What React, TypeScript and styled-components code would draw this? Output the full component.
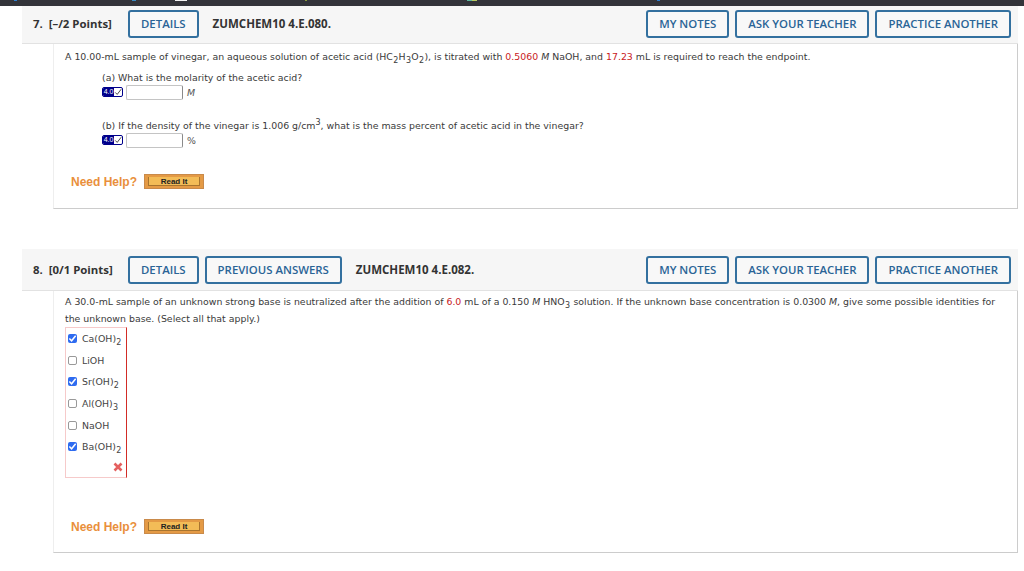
import React from 'react';
import styled, { createGlobalStyle } from 'styled-components';

const GlobalStyle = createGlobalStyle`
html, body {
  margin: 0;
  padding: 0;
  background: #fff;
}
`;

const bodyFont = `"DejaVu Sans", Verdana, sans-serif`;
const headFont = `"Open Sans", "Noto Sans", sans-serif`;

type QuestionHeaderProps = {
  label: string;
  code: string;
  showPrevious?: boolean;
  clipped?: boolean;
};

const QuestionHeader: React.FC<QuestionHeaderProps> = ({ label, code, showPrevious, clipped }) => (
  <Header $clipped={clipped}>
    <PointsLabel>{label}</PointsLabel>
    <HeadButton>DETAILS</HeadButton>
    {showPrevious && <HeadButton>PREVIOUS ANSWERS</HeadButton>}
    <CodeLabel>{code}</CodeLabel>
    <HeaderRight>
      <SideButton>MY NOTES</SideButton>
      <SideButton>ASK YOUR TEACHER</SideButton>
      <SideButton>PRACTICE ANOTHER</SideButton>
    </HeaderRight>
  </Header>
);

const AnswerRow: React.FC<{ unit: React.ReactNode }> = ({ unit }) => (
  <AnswerLine>
    <KeypadIcon>
      <KeypadNum>4.0</KeypadNum>
      <KeypadCheck viewBox="0 0 10 10">
        <path d="M1.5 5.5 L4 8 L9 1.5" fill="none" stroke="#444" strokeWidth="1.2" />
      </KeypadCheck>
    </KeypadIcon>
    <AnswerInput />
    <Unit>{unit}</Unit>
  </AnswerLine>
);

const NeedHelp: React.FC = () => (
  <HelpRow>
    <HelpText>Need Help?</HelpText>
    <ReadIt>
      <ReadItInner>Read It</ReadItInner>
    </ReadIt>
  </HelpRow>
);

export default function App() {
  const choices = [
    { id: 'ca', checked: true, label: <>Ca(OH)<Sub>2</Sub></> },
    { id: 'li', checked: false, label: <>LiOH</> },
    { id: 'sr', checked: true, label: <>Sr(OH)<Sub>2</Sub></> },
    { id: 'al', checked: false, label: <>Al(OH)<Sub>3</Sub></> },
    { id: 'na', checked: false, label: <>NaOH</> },
    { id: 'ba', checked: true, label: <>Ba(OH)<Sub>2</Sub></> },
  ];

  return (
    <Page>
      <GlobalStyle />
      <TopBar>
        <TopMark $left={14} $width={3} $color="#2f7fd0" />
        <TopMark $left={132} $width={4} $color="#3a8ac0" />
        <TopMark $left={175} $width={12} $color="#f4f4f4" />
        <TopMark $left={305} $width={2} $color="#8a9a3a" />
        <TopMark $left={467} $width={5} $color="#5fb8a0" />
        <TopMark $left={472} $width={5} $color="#b8c860" />
        <TopMark $left={657} $width={3} $color="#2f7fd0" />
      </TopBar>

      <Question>
        <QuestionHeader label="7.  [–/2 Points]" code="ZUMCHEM10 4.E.080." clipped />
        <Body>
          <Prompt>
            A 10.00-mL sample of vinegar, an aqueous solution of acetic acid (HC<Sub>2</Sub>H<Sub>3</Sub>O<Sub>2</Sub>), is titrated with <Red>0.5060</Red> <i>M</i> NaOH, and <Red>17.23</Red> mL is required to reach the endpoint.
          </Prompt>
          <Part>
            <PartText>(a) What is the molarity of the acetic acid?</PartText>
            <AnswerRow unit={<i>M</i>} />
          </Part>
          <Part $gap>
            <PartText>
              (b) If the density of the vinegar is 1.006 g/cm<Sup>3</Sup>, what is the mass percent of acetic acid in the vinegar?
            </PartText>
            <AnswerRow unit="%" />
          </Part>
          <NeedHelp />
        </Body>
      </Question>

      <Question $second>
        <QuestionHeader label="8.  [0/1 Points]" code="ZUMCHEM10 4.E.082." showPrevious />
        <Body $second>
          <Prompt $tall>
            A 30.0-mL sample of an unknown strong base is neutralized after the addition of <Red>6.0</Red> mL of a 0.150 <i>M</i> HNO<Sub>3</Sub> solution. If the unknown base concentration is 0.0300 <i>M</i>, give some possible identities for
            <br />
            the unknown base. (Select all that apply.)
          </Prompt>
          <ChoiceBox>
            {choices.map(c => (
              <Choice key={c.id}>
                <CheckBox $checked={c.checked}>
                  {c.checked && (
                    <svg viewBox="0 0 10 10" width="9" height="9">
                      <path d="M1.5 5 L4 7.5 L8.5 2" fill="none" stroke="#fff" strokeWidth="1.7" />
                    </svg>
                  )}
                </CheckBox>
                <span>{c.label}</span>
              </Choice>
            ))}
            <WrongMark viewBox="0 0 10 10">
              <path d="M1.5 1.5 L8.5 8.5 M8.5 1.5 L1.5 8.5" stroke="#e4605f" strokeWidth="2.6" fill="none" />
            </WrongMark>
          </ChoiceBox>
          <NeedHelp />
        </Body>
      </Question>
    </Page>
  );
}

const Page = styled.div`
width: 1024px;
height: 571px;
overflow: hidden;
background: #fff;
font-family: ${bodyFont};
color: #3a3a3a;
`;

const TopBar = styled.div`
position: relative;
height: 6px;
background: #33343a;
`;

const TopMark = styled.span<{ $left: number; $width: number; $color: string }>`
position: absolute;
top: 0;
left: ${p => p.$left}px;
width: ${p => p.$width}px;
height: 1px;
background: ${p => p.$color};
`;

const Question = styled.section<{ $second?: boolean }>`
margin: ${p => (p.$second ? '40px' : '0')} 6px 0 22px;
`;

const Header = styled.div<{ $clipped?: boolean }>`
display: flex;
align-items: center;
height: ${p => (p.$clipped ? '38px' : '42px')};
padding: 0 7px ${p => (p.$clipped ? '2px' : '0')} 11px;
box-sizing: border-box;
background: #f6f6f6;
border-bottom: 1px solid #e2e2e2;
font-family: ${headFont};
`;

const PointsLabel = styled.div`
width: 95px;
font-size: 11.4px;
font-weight: 700;
color: #333;
white-space: pre;
`;

const HeadButton = styled.div`
display: flex;
align-items: center;
height: 28px;
box-sizing: border-box;
padding: 0 11px;
margin-right: 6px;
border: 2px solid #33709f;
border-radius: 3px;
font-size: 11.4px;
font-weight: 600;
color: #2a6496;
background: #f8f8f8;
`;

const CodeLabel = styled.div`
margin-left: 8px;
font-size: 11.5px;
font-weight: 700;
color: #333;
`;

const HeaderRight = styled.div`
display: flex;
gap: 6px;
margin-left: auto;
`;

const SideButton = styled(HeadButton)`
margin-right: 0;
`;

const Body = styled.div<{ $second?: boolean }>`
margin-left: 31px;
height: ${p => (p.$second ? '262px' : '165px')};
box-sizing: border-box;
padding: ${p => (p.$second ? '3px' : '6px')} 11px 0 11px;
border-left: 1px solid #eee;
border-right: 1px solid #ccc;
border-bottom: 1px solid #ccc;
`;

const Prompt = styled.div<{ $tall?: boolean }>`
font-size: 9.4px;
line-height: ${p => (p.$tall ? '16.5px' : '13px')};
`;

const Red = styled.span`
color: #c8201c;
`;

const Sub = styled.sub`
font-size: 8px;
line-height: 0;
vertical-align: -3px;
margin: 0 0.3px;
`;

const Sup = styled.sup`
font-size: 8px;
line-height: 0;
`;

const Part = styled.div<{ $gap?: boolean }>`
margin: ${p => (p.$gap ? '19px' : '8px')} 0 0 37px;
font-size: 9.4px;
`;

const PartText = styled.div`
line-height: 13px;
`;

const AnswerLine = styled.div`
display: flex;
align-items: center;
height: 16px;
`;

const KeypadIcon = styled.span`
display: inline-flex;
width: 21px;
height: 10px;
margin-right: 3px;
border: 1px solid #00008b;
border-radius: 2px;
box-sizing: border-box;
overflow: hidden;
background: #fff;
`;

const KeypadNum = styled.span`
width: 11px;
background: #00008b;
color: #fff;
font-family: "Liberation Sans", sans-serif;
font-size: 7px;
line-height: 8px;
text-align: center;
white-space: nowrap;
overflow: hidden;
`;

const KeypadCheck = styled.svg`
width: 8px;
height: 8px;
`;

const AnswerInput = styled.span`
display: block;
width: 57px;
height: 15px;
box-sizing: border-box;
background: #fff;
border: 1px solid #c4c4c4;
border-right-color: #8a8a8a;
border-radius: 2px;
`;

const Unit = styled.span`
margin-left: 4px;
font-size: 9.4px;
color: #555;
`;

const HelpRow = styled.div`
display: flex;
align-items: center;
gap: 7px;
margin: 26px 0 0 6px;
`;

const HelpText = styled.span`
font-family: "Liberation Sans", Arial, sans-serif;
font-size: 12px;
font-weight: 700;
color: #e98f3c;
`;

const ReadIt = styled.span`
display: block;
width: 60px;
height: 15px;
box-sizing: border-box;
padding: 2px 3px;
background: #e49a45;
border: 1px solid #c98a4a;
`;

const ReadItInner = styled.span`
display: flex;
align-items: center;
justify-content: center;
height: 100%;
background: #f3bc57;
border: 1px solid #a8742f;
border-top-width: 0;
box-sizing: border-box;
font-family: "Liberation Sans", Arial, sans-serif;
font-size: 8px;
font-weight: 700;
color: #222;
`;

const ChoiceBox = styled.div`
position: relative;
width: 62px;
height: 151px;
box-sizing: border-box;
margin-bottom: 41px;
border: 1px solid #f6caca;
border-right: 1px solid #d22c26;
`;

const Choice = styled.div`
display: flex;
align-items: center;
gap: 5px;
height: 21.6px;
padding-left: 2px;
font-size: 9.4px;
color: #444;
`;

const CheckBox = styled.span<{ $checked: boolean }>`
display: flex;
align-items: center;
justify-content: center;
width: 9px;
height: 9px;
box-sizing: border-box;
border-radius: 2px;
border: ${p => (p.$checked ? '0' : '1px solid #999')};
background: ${p => (p.$checked ? '#2e6bf0' : '#fff')};
`;

const WrongMark = styled.svg`
position: absolute;
right: 3px;
bottom: 5px;
width: 10px;
height: 10px;
`;
